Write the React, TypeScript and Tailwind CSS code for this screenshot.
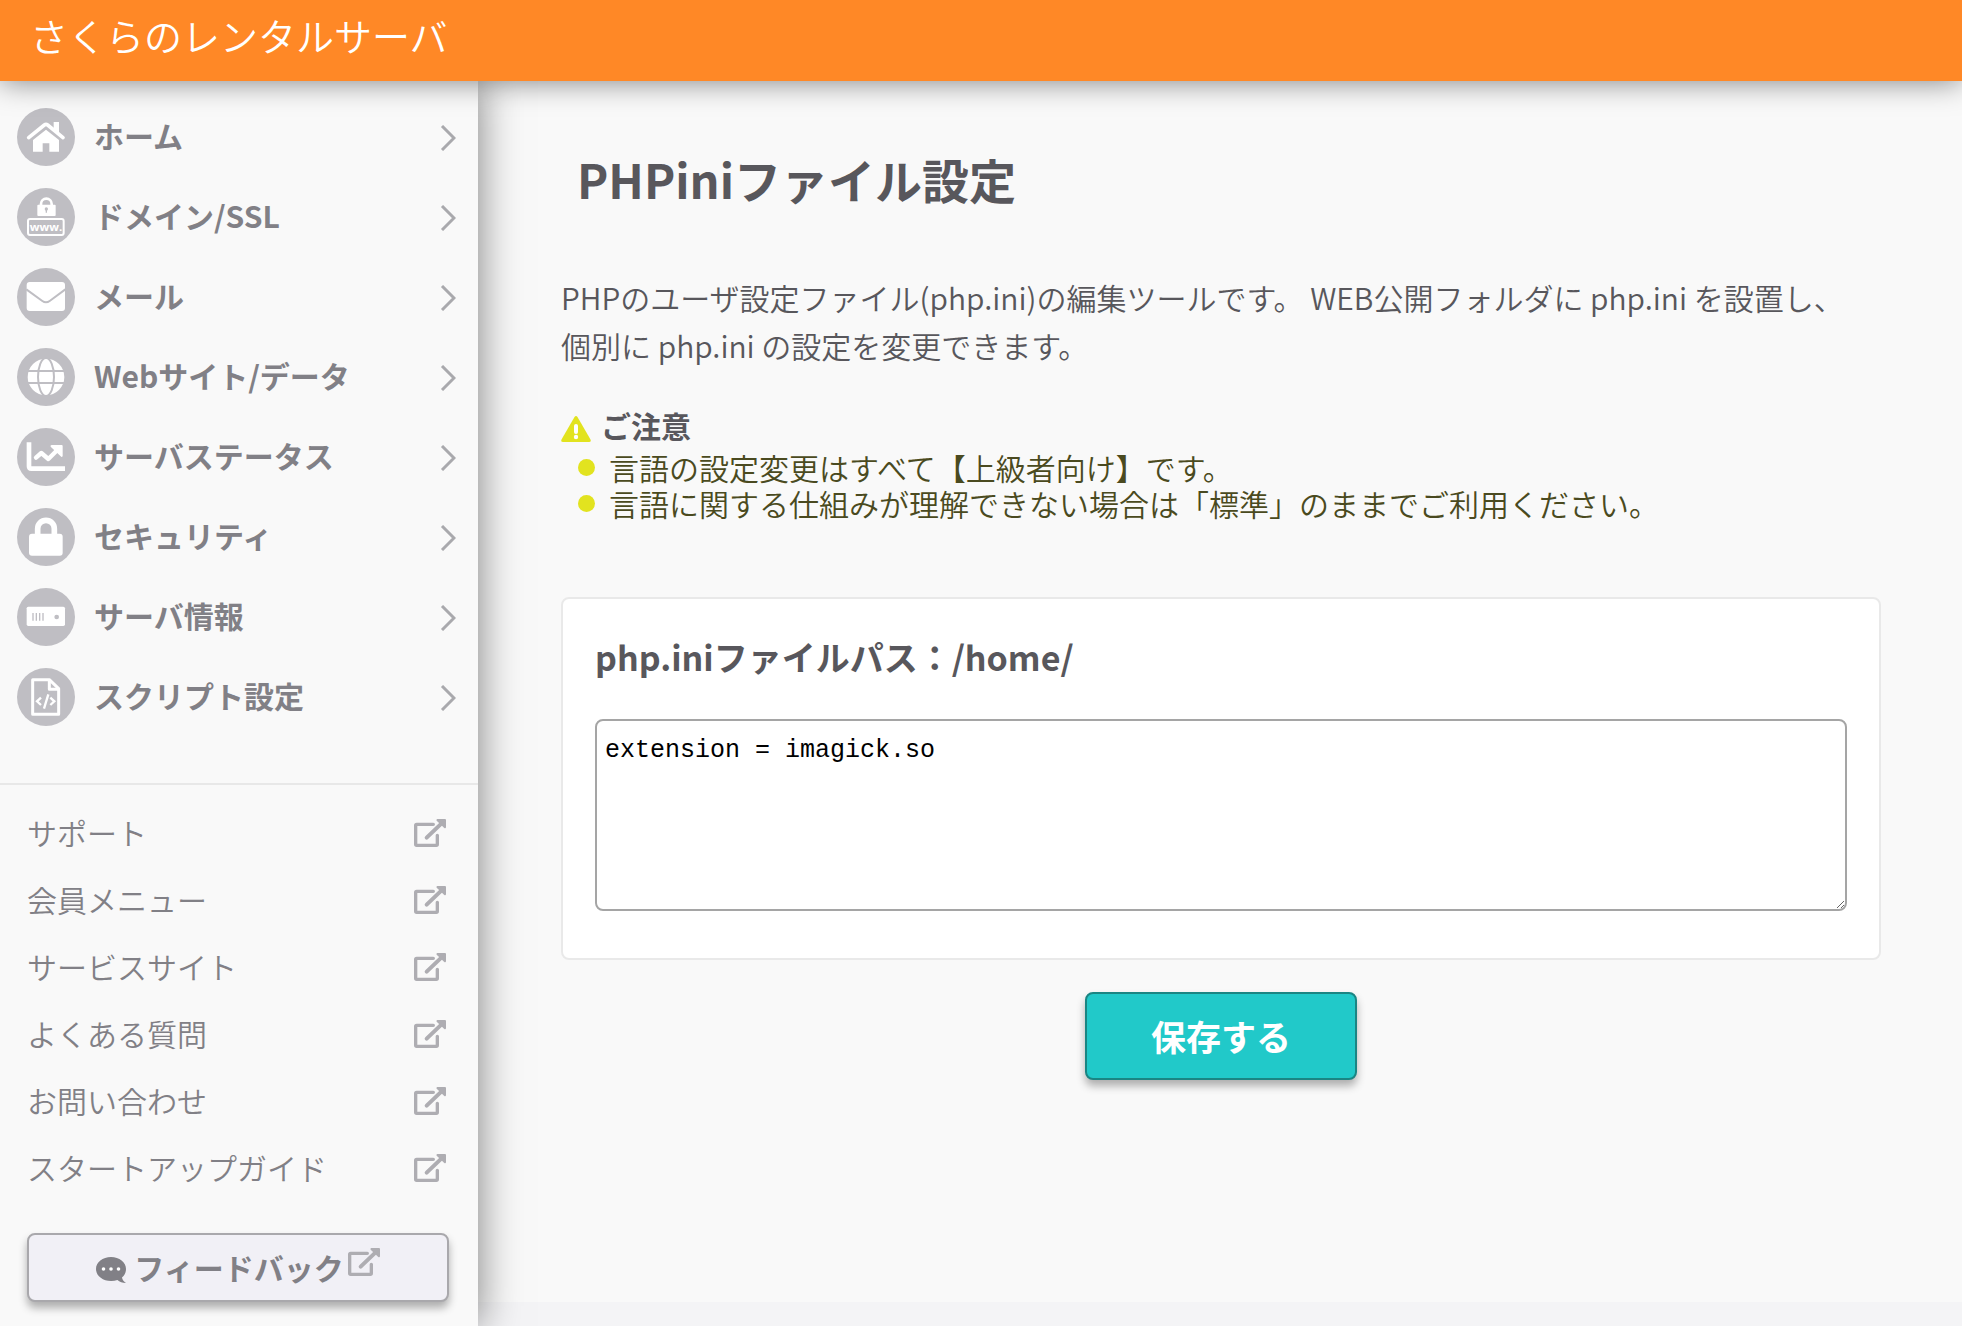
import type { ReactNode } from "react";

const GRAY = "#bfbec3";

function MenuIcon({ children }: { children: ReactNode }) {
  return (
    <svg viewBox="0 0 174 174" className="size-[58px] shrink-0" aria-hidden="true">
      <circle cx="87" cy="87" r="87" fill={GRAY} />
      {children}
    </svg>
  );
}

const HomeIcon = (
  <MenuIcon>
    <path d="M110 42h16v34l-16-14z" fill="#fff" />
    <path d="M35 89 82 51q5-4 10 0l46 38" fill="none" stroke="#fff" strokeWidth="11" strokeLinecap="round" strokeLinejoin="round" />
    <path d="M48 96 87 65l39 31v35H97v-25H77v25H48z" fill="#fff" />
  </MenuIcon>
);

const DomainIcon = (
  <MenuIcon>
    <path d="M72 52V48a16 16 0 0 1 32 0v4" fill="none" stroke="#fff" strokeWidth="8" />
    <rect x="61" y="50" width="55" height="34" rx="3" fill="#fff" />
    <circle cx="88" cy="63" r="5" fill={GRAY} />
    <path d="M86 64h4v10h-4z" fill={GRAY} />
    <rect x="33" y="93" width="107" height="48" rx="6" fill="none" stroke="#fff" strokeWidth="6" />
    <text x="87" y="128" textAnchor="middle" fontSize="34" fontWeight="700" fontFamily="Open Sans, sans-serif" fill="#fff">
      www.
    </text>
  </MenuIcon>
);

const MailIcon = (
  <MenuIcon>
    <rect x="29" y="42" width="115" height="87" rx="9" fill="#fff" />
    <path d="M28 64 76 99q11 8 22 0l47-35" fill="none" stroke={GRAY} strokeWidth="6" />
  </MenuIcon>
);

const GlobeIcon = (
  <MenuIcon>
    <circle cx="87" cy="87" r="55" fill="#fff" />
    <g fill="none" stroke={GRAY} strokeWidth="6">
      <path d="M30 69h114M30 105h114" />
      <ellipse cx="87" cy="87" rx="24" ry="57" />
    </g>
  </MenuIcon>
);

const ChartIcon = (
  <MenuIcon>
    <path d="M36 43v72q0 7 7 7h101" fill="none" stroke="#fff" strokeWidth="14" />
    <path d="m57 89 16-14 21 18 30-30" fill="none" stroke="#fff" strokeWidth="13" strokeLinecap="round" strokeLinejoin="round" />
    <path d="M104 51h30q3 0 3 3v30q-2 5-6 1l-30-29q-2-4 3-5z" fill="#fff" />
  </MenuIcon>
);

const LockIcon = (
  <MenuIcon>
    <path d="M62 80V62a25 25 0 0 1 50 0v18" fill="none" stroke="#fff" strokeWidth="17" />
    <rect x="36" y="77" width="101" height="66" rx="9" fill="#fff" />
  </MenuIcon>
);

const ServerIcon = (
  <MenuIcon>
    <rect x="29" y="56" width="115" height="58" rx="5" fill="#fff" />
    <path d="M48 75v23M58 75v23M68 75v23M78 75v23" stroke={GRAY} strokeWidth="4" />
    <circle cx="119" cy="87" r="7" fill={GRAY} />
  </MenuIcon>
);

const ScriptIcon = (
  <MenuIcon>
    <g fill="none" stroke="#fff" strokeWidth="9" strokeLinejoin="round">
      <path d="M47 35h50l28 27v77H47z" />
      <path d="M97 35v29h28" />
    </g>
    <path d="m72 89-12 11 12 11M100 89l12 11-12 11M94 79l-13 43" fill="none" stroke="#fff" strokeWidth="7" />
  </MenuIcon>
);

function ExternalIcon({ className = "" }: { className?: string }) {
  return (
    <svg viewBox="0 0 96 84" className={"h-7 w-8 shrink-0 " + className} fill="none" stroke="#aeadb2" aria-hidden="true">
      <path d="M58 16H8q-3 0-3 3v57q0 3 3 3h59q3 0 3-3V49" strokeWidth="10" strokeLinecap="round" />
      <path d="M38 56 82 14" strokeWidth="12" strokeLinecap="round" />
      <path d="M70 0h23q3 0 3 3v22q-1 4-5 2L68 5q-2-4 2-5z" fill="#aeadb2" stroke="none" />
    </svg>
  );
}

const MENU = [
  { label: "ホーム", icon: HomeIcon },
  { label: "ドメイン/SSL", icon: DomainIcon },
  { label: "メール", icon: MailIcon },
  { label: "Webサイト/データ", icon: GlobeIcon },
  { label: "サーバステータス", icon: ChartIcon },
  { label: "セキュリティ", icon: LockIcon },
  { label: "サーバ情報", icon: ServerIcon },
  { label: "スクリプト設定", icon: ScriptIcon },
];

const LINKS = ["サポート", "会員メニュー", "サービスサイト", "よくある質問", "お問い合わせ", "スタートアップガイド"];

const NOTES = [
  "言語の設定変更はすべて【上級者向け】です。",
  "言語に関する仕組みが理解できない場合は「標準」のままでご利用ください。",
];

function Sidebar() {
  return (
    <aside className="relative z-10 w-[478px] shrink-0 bg-[#f9f9f9] pb-6 text-[30px] text-[#818086] shadow-[0_0_40px_rgba(0,0,0,0.5)]">
      <nav className="pt-4">
        <ul>
          {MENU.map((item) => (
            <li key={item.label}>
              <a href="#" className="flex h-20 items-center pr-[22px] pl-[17px] font-bold">
                {item.icon}
                <span className="ml-[19px] flex-1 pb-1">{item.label}</span>
                <svg viewBox="0 0 16 26" className="mt-[2px] h-[26px] w-4" fill="none" stroke="#a9a9ad" strokeWidth="3" aria-hidden="true">
                  <path d="m2 1 12 12L2 25" />
                </svg>
              </a>
            </li>
          ))}
        </ul>
      </nav>

      <ul className="mt-[46px] border-t-2 border-[#e8e8e8] pt-[14px]">
        {LINKS.map((label) => (
          <li key={label}>
            <a href="#" className="flex h-[67px] items-center justify-between pr-8 pl-[27px] font-[350]">
              {label}
              <ExternalIcon />
            </a>
          </li>
        ))}
      </ul>

      <div className="mt-8 pr-[29px] pl-[27px]">
        <button
          type="button"
          className="flex h-[69px] w-full items-center justify-center rounded-lg border-2 border-[#a9a8ac] bg-[#f1f0f6] font-bold shadow-[0_6px_8px_rgba(0,0,0,0.3)]"
        >
          <svg viewBox="0 0 30 26" className="mt-1 mr-2 h-[26px] w-[30px]" aria-hidden="true">
            <path d="M15 0c8.300 0 15 5.200 15 12 0 3.500-1.500 6.300-4 8.500.300 2.200 1.600 3.900 4 5.500-3.500 0-6.500-1-8.600-3A19 19 0 0 1 15 24C6.700 24 0 18.800 0 12S6.700 0 15 0z" fill="#818086" />
            <g fill="#fff">
              <circle cx="7.500" cy="12" r="1.800" />
              <circle cx="15" cy="12" r="1.800" />
              <circle cx="22.500" cy="12" r="1.800" />
            </g>
          </svg>
          フィードバック
          <ExternalIcon className="mb-3 ml-1" />
        </button>
      </div>
    </aside>
  );
}

export default function App() {
  return (
    <div className="flex min-h-screen flex-col bg-[#f4f4f6] font-['Noto_Sans_CJK_JP',sans-serif] text-[#58575c]" lang="ja">
      <header className="relative z-20 flex h-[81px] items-center bg-[#ff8826] px-[30px] pb-3 shadow-[0_0_30px_rgba(0,0,0,0.5)]">
        <a href="#" className="text-[38px] leading-none font-[350] text-white">
          さくらのレンタルサーバ
        </a>
      </header>

      <div className="flex flex-1">
        <Sidebar />

        <div className="flex min-w-0 flex-1 flex-col pb-6">
          <main className="flex-1 bg-[#f9f9f9] pt-[68px] pr-[81px] pl-[83px] text-[30px]">
            <h1 className="pl-4 text-[47px] leading-[60px] font-bold">PHPiniファイル設定</h1>
            <p className="mt-16 leading-[48px] font-[350]">
              PHPのユーザ設定ファイル(php.ini)の編集ツールです。 WEB公開フォルダに php.ini を設置し、
              <br />
              個別に php.ini の設定を変更できます。
            </p>

            <section className="mt-[38px] leading-9">
              <h2 className="flex items-center gap-[10px] font-bold">
                <svg viewBox="0 0 30 26" className="mt-2 h-[26px] w-[30px]" aria-hidden="true">
                  <path d="M13.500 1q1.500-2 3 0l13 22.500Q30.500 26 28 26H2q-2.500 0-1.500-2.500z" fill="#e2e31f" />
                  <path d="M15 10v6" stroke="#fff" strokeWidth="4" strokeLinecap="round" />
                  <circle cx="15" cy="21" r="2.200" fill="#fff" />
                </svg>
                ご注意
              </h2>
              <ul className="mt-[6px] pl-[17px] font-[350] text-[#4a4a20]">
                {NOTES.map((note) => (
                  <li key={note} className="flex items-center gap-[14px]">
                    <span className="size-[17px] shrink-0 rounded-full bg-[#e2e31f]" />
                    {note}
                  </li>
                ))}
              </ul>
            </section>

            <form onSubmit={(e) => e.preventDefault()}>
              <div className="mt-[76px] rounded-lg border-2 border-[#e9e9e9] bg-white px-8 pt-[34px] pb-[47px]">
                <label htmlFor="phpini" className="block text-[34px] leading-[48px] font-bold">
                  php.iniファイルパス：/home/
                </label>
                <textarea
                  id="phpini"
                  defaultValue="extension = imagick.so"
                  className="mt-[38px] block h-[192px] w-full rounded-lg border-2 border-[#a5a5a5] bg-white px-2 py-3 font-['Liberation_Mono',monospace] text-[25px] leading-9 text-black"
                />
              </div>
              <button
                type="submit"
                className="mx-auto mt-8 block h-[88px] w-[272px] rounded-lg border-2 border-[#1a8583] bg-[#21c9c9] text-[35px] font-bold text-white shadow-[0_6px_8px_rgba(0,0,0,0.3)]"
              >
                保存する
              </button>
            </form>
          </main>
        </div>
      </div>
    </div>
  );
}
